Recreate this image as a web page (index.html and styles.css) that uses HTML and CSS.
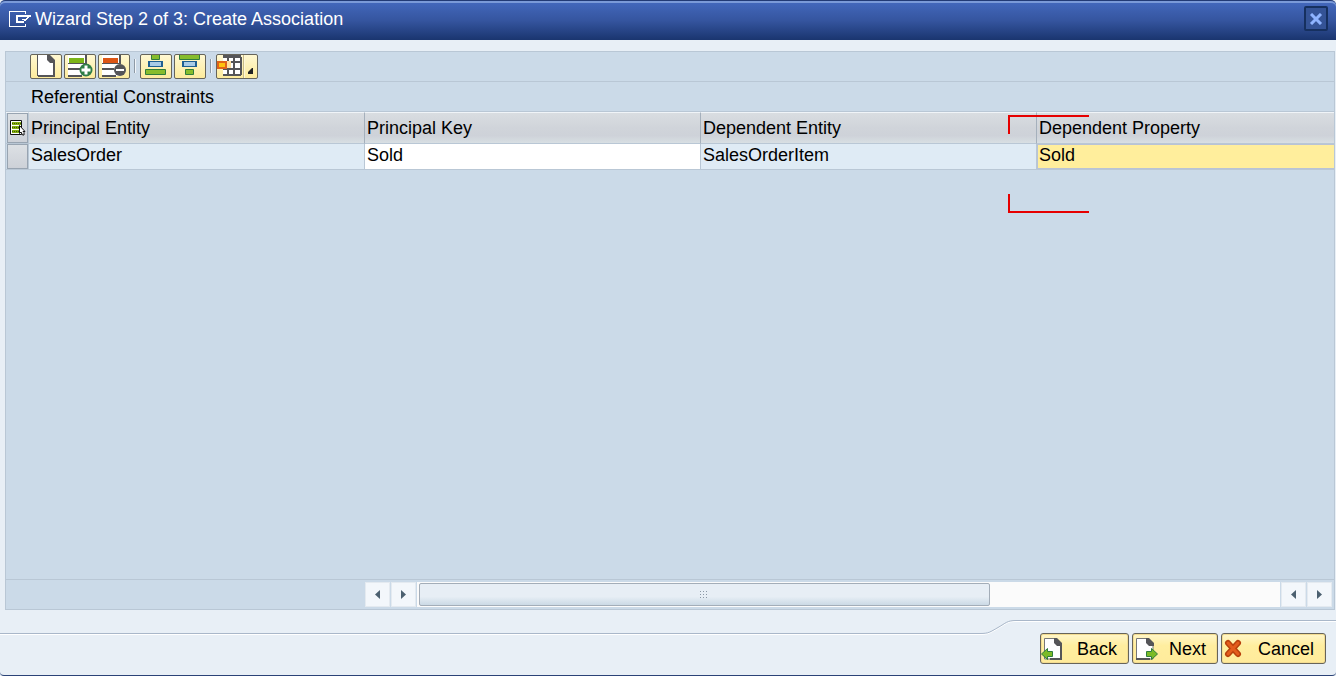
FILE: index.html
```html
<!DOCTYPE html>
<html lang="en">
<head>
<meta charset="utf-8">
<title>Wizard Step 2 of 3: Create Association</title>
<link rel="stylesheet" href="styles.css">
</head>
<body>
<div class="dialog">
  <header class="titlebar">
    <svg class="title-icon" width="22" height="16" viewBox="0 0 22 16" fill="none" stroke="#fff" shape-rendering="crispEdges">
      <path d="M16 3V.5H.5V15.500H16V13"/>
      <path d="M7 5H22M8 5V12M7 11H15" stroke-width="2"/>
      <path d="M18 6.500H20M17 7.500H19M13 8.500H18M15 9.500H17"/>
    </svg>
    <h1 class="title">Wizard Step 2 of 3: Create Association</h1>
    <button class="close" type="button" aria-label="Close">
      <svg width="14" height="12" viewBox="0 0 14 12" stroke="#8fb4ff" stroke-width="3"><path d="M2 1L12 11M12 1L2 11"/></svg>
    </button>
  </header>

  <main class="content">
    <section class="panel">
      <div class="toolbar" role="toolbar">
        <button class="tool" type="button" aria-label="New">
          <svg width="30" height="23" viewBox="0 0 30 23"><path fill="#fff" d="M7 0H17L23 6V20H7Z"/><path fill="none" stroke="#555558" stroke-width="2" d="M7 21H23V6"/><path fill="#555558" d="M16 0H19L24 5V8H19L16 5Z"/><path stroke="#555558" d="M6.500 0V21"/></svg>
        </button>
        <button class="tool" type="button" aria-label="Insert row">
          <svg width="30" height="23" viewBox="0 0 30 23"><path fill="#fff" d="M3 0H22V21H3Z"/><path fill="#555558" d="M20 0H22V9H20ZM3 8H22V9H3ZM3 13H15V15H3ZM3 20H17V22H3Z"/><path fill="#7cb518" d="M4 3H19V8H4Z"/><circle cx="21" cy="15" r="6.500" fill="#2f7d46"/><path stroke="#fff" stroke-width="3" d="M16.500 15H25.500M21 10.500V19.500"/></svg>
        </button>
        <button class="tool" type="button" aria-label="Delete row">
          <svg width="30" height="23" viewBox="0 0 30 23"><path fill="#fff" d="M3 0H22V21H3Z"/><path fill="#555558" d="M20 0H22V9H20ZM3 8H22V9H3ZM3 13H15V15H3ZM3 20H17V22H3Z"/><path fill="#dc5514" d="M4 3H19V8H4Z"/><circle cx="21" cy="15" r="6" fill="#555558"/><path stroke="#fff" stroke-width="2" d="M17 15H25"/></svg>
        </button>
        <span class="divider"></span>
        <button class="tool" type="button" aria-label="Sort ascending">
          <svg width="30" height="23" viewBox="0 0 30 23"><path fill="#86bc2c" stroke="#2f7d3c" d="M10.500 -1.500H18.500V4.500H10.500Z"/><path fill="#1f5f92" d="M7 6H22V12H7Z"/><path fill="#a9cbe6" d="M9 7H20V11H9Z"/><path fill="#86bc2c" stroke="#2f7d3c" d="M4.500 14.500H24.500V19.500H4.500Z"/></svg>
        </button>
        <button class="tool" type="button" aria-label="Sort descending">
          <svg width="30" height="23" viewBox="0 0 30 23"><path fill="#86bc2c" stroke="#2f7d3c" d="M4.500 -1.500H24.500V4.500H4.500Z"/><path fill="#1f5f92" d="M7 6H22V12H7Z"/><path fill="#a9cbe6" d="M9 7H20V11H9Z"/><path fill="#86bc2c" stroke="#2f7d3c" d="M10.500 14.500H18.500V19.500H10.500Z"/></svg>
        </button>
        <span class="divider"></span>
        <button class="tool tool-menu" type="button" aria-label="Configuration">
          <svg width="40" height="23" viewBox="0 0 40 23"><path fill="#fff" d="M6 0H24V20H6Z"/><path fill="#555558" d="M6 0H24V3H6Z"/><path fill="none" stroke="#555558" stroke-width="2" d="M11 2V20M17 2V20M24 2V20M6 7H24M6 14H24M6 20H24"/><path fill="#ffe0a0" d="M8 6H14V13H8Z"/><path fill="#ffc20e" stroke="#e0631a" stroke-width="2" d="M1 7H9V13H1Z"/><path stroke="#c9bc86" d="M26.500 0V23"/><path stroke="#fff8d8" d="M27.500 0V23"/><path fill="#222" d="M36 13V19H31V17L35 13Z"/></svg>
        </button>
      </div>
      <h2 class="caption">Referential Constraints</h2>

      <div class="grid-area">
        <table class="grid">
          <colgroup><col class="col-select"><col class="col-data"><col class="col-data"><col class="col-data"><col></colgroup>
          <thead>
            <tr>
              <th class="select">
                <button class="select-all" type="button" aria-label="Select all">
                  <svg width="17" height="16" viewBox="0 0 17 16"><path fill="#fff" stroke="#111" d="M1.500 .5H12.500V14.500H1.500Z"/><path fill="#84ad10" d="M3 2H12V5H3ZM3 6H12V9H3ZM3 10H12V13H3Z"/><path stroke="#3e5a06" stroke-dasharray="1 1" d="M3 3.500H12M3 7.500H12M3 11.500H12"/><path fill="#fff" stroke="#111" d="M10.500 5.500V13.500L12 12L13.500 15H15V12.500L14 11.500H16Z"/></svg>
                </button>
              </th>
              <th>Principal Entity</th><th>Principal Key</th><th>Dependent Entity</th><th>Dependent Property</th>
            </tr>
          </thead>
          <tbody>
            <tr>
              <td class="select"><button class="select-row" type="button" aria-label="Select row"></button></td>
              <td>SalesOrder</td>
              <td class="editable"><input type="text" value="Sold" aria-label="Principal Key"></td>
              <td>SalesOrderItem</td>
              <td class="editable active"><input type="text" value="Sold" aria-label="Dependent Property"></td>
            </tr>
          </tbody>
        </table>
        <div class="marker"><span class="marker-top"></span><span class="marker-bottom"></span></div>
      </div>

      <div class="scrollbar">
        <button class="arrow" type="button" aria-label="Scroll left"><svg width="5" height="9" viewBox="0 0 5 9"><path fill="#4c6070" d="M5 0V9L0 4.500Z"/></svg></button>
        <button class="arrow" type="button" aria-label="Scroll right"><svg width="5" height="9" viewBox="0 0 5 9"><path fill="#4c6070" d="M0 0V9L5 4.500Z"/></svg></button>
        <div class="track">
          <div class="thumb"><svg width="9" height="7" viewBox="0 0 9 7" stroke="#8b98a5" stroke-dasharray="1 2"><path d="M0 .5H9M0 3.500H9M0 6.500H9"/></svg></div>
        </div>
        <button class="arrow" type="button" aria-label="Scroll left"><svg width="5" height="9" viewBox="0 0 5 9"><path fill="#4c6070" d="M5 0V9L0 4.500Z"/></svg></button>
        <button class="arrow" type="button" aria-label="Scroll right"><svg width="5" height="9" viewBox="0 0 5 9"><path fill="#4c6070" d="M0 0V9L5 4.500Z"/></svg></button>
      </div>
    </section>
  </main>

  <footer class="footer">
    <div class="edge">
      <span class="edge-low"></span>
      <svg class="edge-curve" width="36" height="15" viewBox="0 0 36 15" fill="none"><path stroke="#fff" d="M0 14.500C9 14.500 10 13 18 8.500S27 1.500 36 1.500"/><path stroke="#a9b7c9" d="M0 13.500C9 13.500 10 12 18 7.500S27 .5 36 .5"/></svg>
      <span class="edge-high"></span>
    </div>
    <div class="actions">
      <button class="action" type="button">
        <svg width="26" height="24" viewBox="0 0 26 24"><path fill="#fff" stroke="#777" d="M3.500 1.500H14L20 7.500V22H3.500Z"/><path fill="none" stroke="#555558" stroke-width="2" d="M9 22H20V7"/><path fill="#555558" d="M13 1H16L21 6V9H16L13 6Z"/><path fill="#7cbb26" stroke="#2f7d3c" d="M.5 17L6.500 11.500V14.500H11.500V19.500H6.500V22.500Z"/></svg>
        Back
      </button>
      <button class="action" type="button">
        <svg width="26" height="24" viewBox="0 0 26 24"><path fill="#fff" stroke="#777" d="M3.500 1.500H14L20 7.500V22H3.500Z"/><path fill="none" stroke="#555558" stroke-width="2" d="M3 22H17"/><path fill="#555558" d="M13 1H16L21 6V9H16L13 6Z"/><path fill="#7cbb26" stroke="#2f7d3c" d="M24.500 17L18.500 11.500V14.500H13.500V19.500H18.500V22.500Z"/></svg>
        Next
      </button>
      <button class="action" type="button">
        <svg width="26" height="24" viewBox="0 0 26 24" stroke-linecap="round"><path stroke="#b8400c" stroke-width="6" d="M6 6L16 17M16 6L6 17"/><path stroke="#e45c1c" stroke-width="3" d="M6 6L16 17M16 6L6 17"/></svg>
        Cancel
      </button>
    </div>
  </footer>
</div>
</body>
</html>
```

FILE: styles.css
```css
* { box-sizing: border-box; }

body {
  margin: 0;
  background: #e8eff6;
  color: #000;
  font: 18px/24px "Liberation Sans", Arial, sans-serif;
}

button, input { font: inherit; color: inherit; }
button { padding: 0; }
svg { display: block; flex: none; }

.dialog {
  display: flex;
  flex-direction: column;
  min-height: 100vh;
  border-bottom: 1px solid #2b4377;
  border-radius: 5px 5px 4px 4px;
}

.titlebar {
  display: flex;
  align-items: center;
  gap: 4px;
  height: 40px;
  padding: 0 8px 4px 9px;
  border-top: 1px solid #223a75;
  box-shadow: inset 0 2px #7b9ad8;
  border-radius: 5px 5px 0 0;
  background: linear-gradient(#4469be, #35559f 50%, #1a356f);
  color: #fff;
}
.title { flex: 1; margin: 0; font-size: 18px; font-weight: 400; }

.close {
  display: grid;
  place-items: center;
  width: 24px;
  height: 25px;
  border: 2px solid #16305f;
  border-radius: 2px;
  background: #345396;
}

.content { display: flex; flex: 1; padding: 11px 1px 10px 5px; }

.panel {
  display: flex;
  flex: 1;
  flex-direction: column;
  border: 1px solid #b9c7d5;
  background: #cbdae8;
}

.toolbar {
  display: flex;
  gap: 2px;
  height: 30px;
  padding: 2px 0 0 24px;
  border-bottom: 1px solid #b9c7d5;
}
.tool {
  width: 32px;
  height: 25px;
  border: 1px solid #66645a;
  border-radius: 2px;
  background: linear-gradient(#fff8d2, #fdeb9c);
  overflow: hidden;
}
.tool-menu { width: 42px; }
.divider { width: 2px; height: 14px; margin: 5px 2px 0; border-left: 1px solid #8e9aa6; border-right: 1px solid #f2f6fa; }

.caption {
  height: 30px;
  margin: 0;
  padding: 3px 25px;
  border-bottom: 1px solid #b9c7d5;
  font-size: 18px;
  font-weight: 400;
}

.grid-area { position: relative; flex: 1; }

.grid {
  width: 100%;
  table-layout: fixed;
  border-collapse: separate;
  border-spacing: 0;
}
.col-select { width: 23px; }
.col-data { width: 336px; }
.grid th, .grid td { padding: 0 0 0 2px; border: 0 solid #b9c7d5; text-align: left; font-weight: 400; }
.grid th {
  height: 32px;
  border-top: 1px solid #f0f4f8;
  border-right: 1px solid #a5b0bc;
  border-bottom-width: 1px;
  background: linear-gradient(#d9dde1, #d0d4da 50%, #ced2d9 75%, #d8dfe3);
}
.grid td { height: 26px; border-width: 0 1px 1px 0; background: #dfebf5; line-height: 22px; vertical-align: top; }
.grid th:last-child, .grid td:last-child { border-right: 0; }
.grid .select { padding: 0 1px; border-right-color: #b9c7d5; background: #cbdae8; }
.grid .editable { padding: 0; background: #fff; }
.editable input {
  display: block;
  width: 100%;
  height: 25px;
  padding: 0 2px 3px;
  border: 0;
  background: transparent;
  outline: 0;
}
.grid .active input { padding: 0 1px 2px; border: 1px solid #b9c3d5; border-width: 1px 0 1px 1px; background: #ffee9c; }

.select-all, .select-row {
  display: grid;
  place-items: center;
  width: 21px;
  height: 30px;
  border: 1px solid #98a4b1;
  background: linear-gradient(#dce0e4, #cdd1d8);
}
.select-row { height: 25px; }

.marker { position: absolute; top: 3px; left: 1002px; width: 81px; height: 98px; pointer-events: none; }
.marker-top, .marker-bottom { position: absolute; left: 0; right: 0; height: 19px; border-left: 2px solid #e60000; }
.marker-top { top: 0; border-top: 2px solid #e60000; }
.marker-bottom { bottom: 0; border-bottom: 2px solid #e60000; }

.scrollbar {
  display: flex;
  gap: 1px;
  height: 30px;
  padding: 2px 2px 2px 359px;
  border-top: 1px solid #b9c7d5;
}
.arrow {
  display: grid;
  place-items: center;
  width: 25px;
  border: 1px solid #e4eaf0;
  background: #f3f7fb;
}
.track { flex: 1; padding: 1px 1px 1px 2px; background: #fbfbfb; }
.thumb {
  display: grid;
  place-items: center;
  width: 66.4%;
  height: 100%;
  border: 1px solid #a3adb8;
  border-radius: 2px;
  background: linear-gradient(#e7eef5 60%, #cbd9e5);
}

.edge { display: flex; height: 13px; }
.edge-low, .edge-high { height: 2px; border-top: 1px solid #a9b7c9; border-bottom: 1px solid #fff; }
.edge-low { flex: 1; margin-top: 13px; }
.edge-high { width: 320px; }

.actions { display: flex; justify-content: flex-end; gap: 3px; padding: 0 10px 11px; }
.action {
  display: flex;
  align-items: center;
  gap: 10px;
  height: 31px;
  padding: 0 11px 0 0;
  border: 1px solid #66645a;
  border-radius: 3px;
  box-shadow: inset 0 0 0 1px #f3dc91;
  background: linear-gradient(#fff6ca, #ffee9f 40%, #ffeb9b);
}
```
